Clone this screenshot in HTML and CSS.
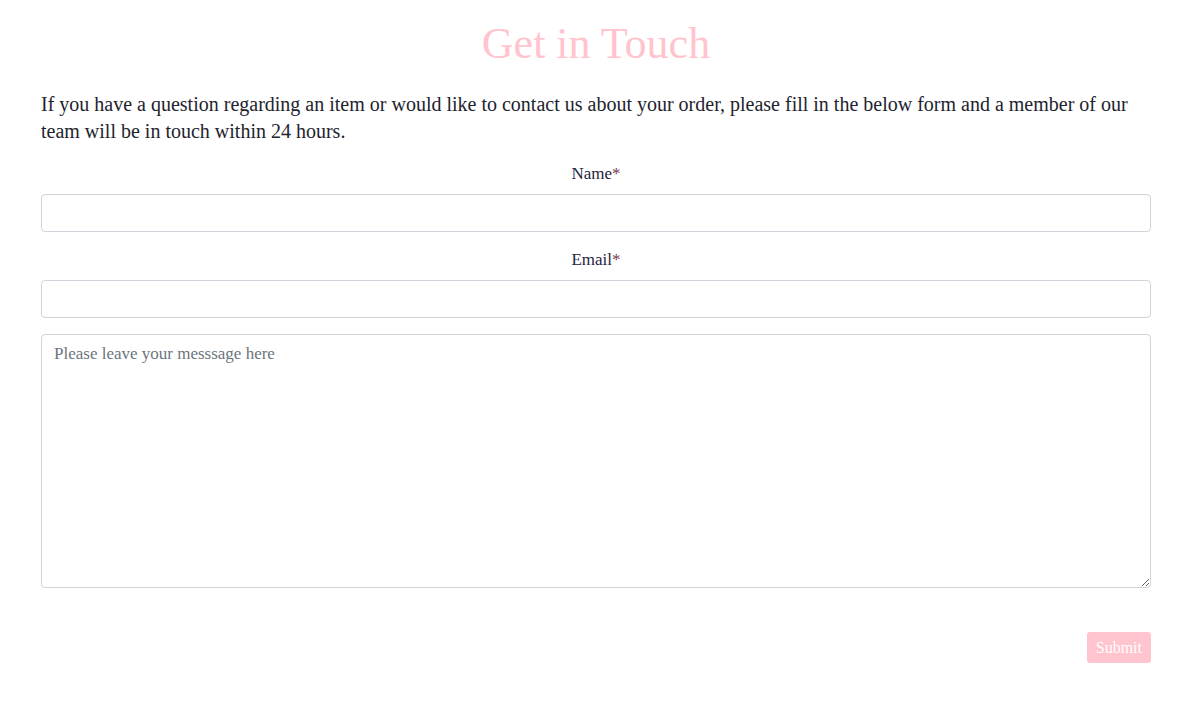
FILE: index.html
```html
<!DOCTYPE html>
<html>
<head>
<meta charset="utf-8">
<link rel="stylesheet" href="styles.css">
</head>
<body>
<main class="container">
  <h1 class="title">Get in Touch</h1>
  <p class="intro">If you have a question regarding an item or would like to contact us about your order, please fill in the below form and a member of our team will be in touch within 24 hours.</p>
  <form class="form">
    <div class="group">
      <label class="label">Name<span class="req">*</span></label>
      <input class="field" type="text">
    </div>
    <div class="group">
      <label class="label">Email<span class="req">*</span></label>
      <input class="field" type="email">
    </div>
    <textarea class="field area" placeholder="Please leave your messsage here"></textarea>
    <div class="actions">
      <button class="submit" type="button">Submit</button>
    </div>
  </form>
</main>
</body>
</html>
```
FILE: styles.css
```css
* { box-sizing: border-box; }
body {
  margin: 0;
  background: #fff;
  font-family: "Liberation Serif", "DejaVu Serif", serif;
  color: #1f2340;
}
.container {
  width: 1110px;
  margin: 0 0 0 41px;
  display: flex;
  flex-direction: column;
}
.title {
  margin: 18px 0 0;
  text-align: center;
  font-weight: 400;
  font-size: 44px;
  line-height: 52px;
  color: #ffc4cd;
}
.intro {
  margin: 21px 0 0;
  font-size: 20px;
  line-height: 27px;
  color: #22232e;
}
.form {
  display: flex;
  flex-direction: column;
  margin-top: 17px;
}
.group {
  display: flex;
  flex-direction: column;
  margin-bottom: 16px;
}
.label {
  text-align: center;
  font-size: 17px;
  line-height: 24px;
  margin-bottom: 8px;
  color: #1f2340;
}
.req { color: #7a3b4a; }
.field {
  width: 100%;
  height: 38px;
  border: 1px solid #ced4da;
  border-radius: 4px;
  padding: 6px 12px;
  font-family: inherit;
  font-size: 17px;
  background: #fff;
}
.area {
  height: 254px;
  padding: 8px 12px;
  resize: vertical;
  line-height: 22px;
}
.area::placeholder { color: #6c757d; }
.actions {
  display: flex;
  justify-content: flex-end;
  margin-top: 44px;
}
.submit {
  border: none;
  border-radius: 3px;
  background: #ffc4cd;
  color: #fff;
  font-family: inherit;
  font-size: 16px;
  height: 31px;
  padding: 0 9px;
}
```
